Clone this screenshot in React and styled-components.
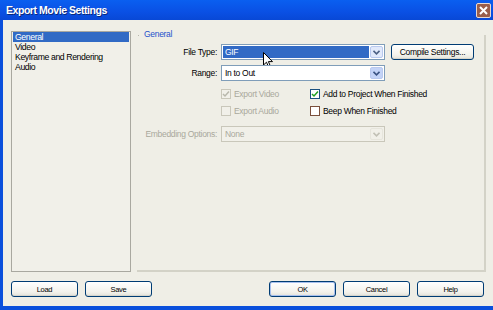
import React from 'react';
import styled, { createGlobalStyle } from 'styled-components';

const GlobalStyle = createGlobalStyle`
  html, body {
    margin: 0;
    padding: 0;
    background: #ffffff;
  }
  body {
    font-family: 'Liberation Sans', Arial, sans-serif;
    font-size: 8.5px;
    letter-spacing: -0.3px;
    color: #000;
  }
  * {
    box-sizing: border-box;
  }
`;

const Window = styled.div`
  width: 493px;
  height: 310px;
  display: flex;
  flex-direction: column;
  background: #0a4fdc;
  padding: 0 0 4px 3px;
  overflow: hidden;
`;

const TitleBar = styled.div`
  height: 20px;
  margin-left: -3px;
  display: flex;
  align-items: center;
  justify-content: space-between;
  padding: 0 2px 0 6px;
  background: linear-gradient(#0a5ff0, #0a50e4 60%, #0848d6);
  color: #fff;
  font-weight: 700;
  font-size: 10.5px;
  letter-spacing: -0.45px;
  text-shadow: 1px 1px 0 #0a2a7a;
`;

const CloseButton = styled.div`
  width: 15px;
  height: 15px;
  margin-top: 1px;
  border: 1px solid #e8d8d0;
  border-radius: 2px;
  background: #9a5e4b;
  display: flex;
  align-items: center;
  justify-content: center;
`;

const Body = styled.div`
  flex: 1;
  background: #efeee6;
  display: flex;
  flex-direction: column;
  padding: 11px 7px 0 8px;
`;

const Main = styled.div`
  display: flex;
  gap: 6px;
`;

const List = styled.div`
  width: 120px;
  height: 241px;
  border: 1px solid #a9a8a0;
  background: #f1f0e9;
  padding: 0 1px;
  font-size: 8.7px;
  letter-spacing: -0.4px;
`;

const ListItem = styled.div`
  height: 10px;
  line-height: 10px;
  padding-left: 2px;
  white-space: nowrap;
  background: ${(p) => (p.selected ? '#316ac5' : 'transparent')};
  color: ${(p) => (p.selected ? '#fff' : '#000')};
`;

const Group = styled.div`
  position: relative;
  flex: 1;
  height: 237px;
  margin-top: 4px;
  border-right: 2px solid #d3d2c7;
  border-bottom: 2px solid #d3d2c7;
  padding-top: 9px;
  display: flex;
  flex-direction: column;
`;

const Legend = styled.div`
  position: absolute;
  top: -6px;
  left: 0;
  padding-left: 7px;
  color: #1f52cc;
  background: linear-gradient(to right, transparent 0, transparent 1px, #b8b7ad 1px, #b8b7ad 2px, transparent 2px);
  background-size: 2px 1px;
  background-repeat: no-repeat;
  background-position: 0 6px;
`;

const Row = styled.div`
  display: flex;
  align-items: center;
  height: ${(p) => p.h || 16}px;
  margin-top: ${(p) => p.gap || 0}px;
`;

const Label = styled.div`
  width: 80px;
  margin-right: 4px;
  text-align: right;
  white-space: nowrap;
  color: ${(p) => (p.disabled ? '#a9a89c' : '#000')};
`;

const Select = styled.div`
  position: relative;
  width: 164px;
  height: 16px;
  border: 1px solid ${(p) => (p.disabled ? '#c9c7ba' : '#7f9db9')};
  background: ${(p) => (p.disabled ? '#f1f0e9' : '#fff')};
  display: flex;
  align-items: stretch;
  padding: 1px;
`;

const SelectValue = styled.div`
  flex: 1;
  padding-left: 2px;
  line-height: 12px;
  margin-right: 1px;
  background: ${(p) => (p.highlight ? '#316ac5' : 'transparent')};
  color: ${(p) => (p.highlight ? '#fff' : p.disabled ? '#a9a89c' : '#000')};
`;

const SelectArrow = styled.div`
  width: 13px;
  border: 1px solid ${(p) => (p.disabled ? '#e6e5dc' : '#b9c9ef')};
  border-radius: 2px;
  background: ${(p) => (p.disabled ? '#f1f0e9' : p.strong ? '#c3d3f7' : '#e1e9fb')};
  display: flex;
  align-items: center;
  justify-content: center;
`;

const Button = styled.div`
  width: ${(p) => p.w || 67}px;
  height: 16px;
  margin-left: ${(p) => p.ml || 0}px;
  border: 1px solid #003c74;
  border-radius: 3px;
  background: linear-gradient(#ffffff, #f3f2ec 70%, #e3e2da);
  box-shadow: ${(p) => (p.def ? 'inset 0 0 0 1px #a8c0ee' : 'inset 0 -1px 0 #d6d5cc')};
  display: flex;
  align-items: center;
  justify-content: center;
  font-size: ${(p) => p.fs || 7.5}px;
  white-space: nowrap;
`;

const CheckRow = styled.div`
  display: flex;
  align-items: center;
  height: 10px;
  margin-top: ${(p) => p.gap}px;
  padding-left: 84px;
`;

const CheckCell = styled.div`
  width: ${(p) => p.w || 'auto'}px;
  display: flex;
  align-items: center;
  gap: 3px;
  white-space: nowrap;
  color: ${(p) => (p.disabled ? '#a9a89c' : '#000')};
`;

const Box = styled.div`
  width: 10px;
  height: 10px;
  border: 1px solid ${(p) => (p.disabled ? '#c9c7ba' : p.warm ? '#7a4f3c' : '#1c5180')};
  background: ${(p) => (p.disabled ? '#f1f0e9' : '#fff')};
  display: flex;
  align-items: center;
  justify-content: center;
`;

const Footer = styled.div`
  display: flex;
  align-items: center;
  margin-top: 9px;
  padding-right: 2px;
  gap: 7px;
`;

const Spacer = styled.div`
  flex: 1;
`;

const Pointer = styled.svg`
  position: absolute;
  left: 41px;
  top: 7px;
`;

const Chevron = ({ color }) => (
  <svg width="7" height="5" viewBox="0 0 7 5">
    <path d="M0.5 0.8 L3.5 3.8 L6.5 0.8" fill="none" stroke={color} strokeWidth="1.6" />
  </svg>
);

const Check = ({ color }) => (
  <svg width="8" height="8" viewBox="0 0 8 8">
    <path d="M1 4 L3 6 L7 1.5" fill="none" stroke={color} strokeWidth="1.5" />
  </svg>
);

const CheckBox = ({ checked, disabled, warm, label, w }) => (
  <CheckCell disabled={disabled} w={w}>
    <Box disabled={disabled} warm={warm}>
      {checked && <Check color={disabled ? '#b9b8ac' : '#21a121'} />}
    </Box>
    {label}
  </CheckCell>
);

const PANELS = ['General', 'Video', 'Keyframe and Rendering', 'Audio'];

export default function App() {
  return (
    <>
      <GlobalStyle />
      <Window>
        <TitleBar>
          <span>Export Movie Settings</span>
          <CloseButton>
            <svg width="9" height="9" viewBox="0 0 9 9">
              <path d="M1 1 L8 8 M8 1 L1 8" stroke="#fff" strokeWidth="2" />
            </svg>
          </CloseButton>
        </TitleBar>
        <Body>
          <Main>
            <List>
              {PANELS.map((p, i) => (
                <ListItem key={p} selected={i === 0}>
                  {p}
                </ListItem>
              ))}
            </List>
            <Group>
              <Legend>General</Legend>
              <Row>
                <Label>File Type:</Label>
                <Select>
                  <SelectValue highlight>GIF</SelectValue>
                  <SelectArrow>
                    <Chevron color="#4d6185" />
                  </SelectArrow>
                  <Pointer width="11" height="17" viewBox="0 0 11 17">
                    <path
                      d="M0.5 0.5 L0.5 13 L3.5 10.2 L5.8 15.5 L7.6 14.7 L5.4 9.6 L9.5 9.6 Z"
                      fill="#fff"
                      stroke="#000"
                      strokeWidth="1"
                    />
                  </Pointer>
                </Select>
                <Button w={83} fs={8.5} ml={6}>
                  Compile Settings...
                </Button>
              </Row>
              <Row gap={5}>
                <Label>Range:</Label>
                <Select>
                  <SelectValue>In to Out</SelectValue>
                  <SelectArrow strong>
                    <Chevron color="#3a5383" />
                  </SelectArrow>
                </Select>
              </Row>
              <CheckRow gap={8}>
                <CheckBox w={89} checked disabled label="Export Video" />
                <CheckBox checked label="Add to Project When Finished" />
              </CheckRow>
              <CheckRow gap={7}>
                <CheckBox w={89} disabled label="Export Audio" />
                <CheckBox warm label="Beep When Finished" />
              </CheckRow>
              <Row gap={10}>
                <Label disabled>Embedding Options:</Label>
                <Select disabled>
                  <SelectValue disabled>None</SelectValue>
                  <SelectArrow disabled>
                    <Chevron color="#c2c1b6" />
                  </SelectArrow>
                </Select>
              </Row>
            </Group>
          </Main>
          <Footer>
            <Button>Load</Button>
            <Button>Save</Button>
            <Spacer />
            <Button def>OK</Button>
            <Button>Cancel</Button>
            <Button>Help</Button>
          </Footer>
        </Body>
      </Window>
    </>
  );
}
